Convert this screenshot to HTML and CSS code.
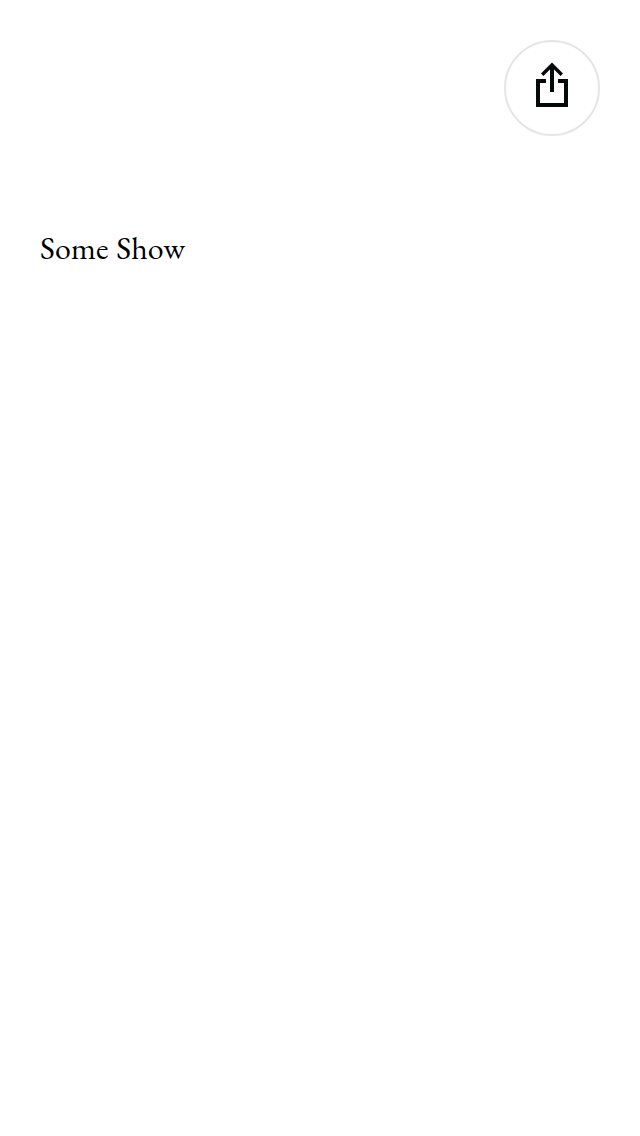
FILE: index.html
```html
<!DOCTYPE html>
<html lang="en">
<head>
<meta charset="utf-8">
<title>Some Show</title>
<link rel="stylesheet" href="styles.css">
</head>
<body>
<main class="page">
  <header class="toolbar">
    <button class="share" type="button" aria-label="Share">
      <svg class="share-icon" viewBox="0 0 36 46" fill="none" stroke="#04090a">
        <path stroke-width="4" d="M12 19H4V43H32V19H24M18 30V3"/>
        <path stroke-width="3.4" d="M8.2 12.8L18 3L27.8 12.8"/>
      </svg>
    </button>
  </header>
  <h1 class="title">Some Show</h1>
</main>
</body>
</html>
```

FILE: styles.css
```css
body {
  margin: 0;
  background: #fff;
}

.page {
  box-sizing: border-box;
  min-height: 1136px;
  padding: 40px;
}

.toolbar {
  display: flex;
  justify-content: flex-end;
}

.share {
  display: flex;
  align-items: center;
  justify-content: center;
  box-sizing: border-box;
  width: 96px;
  height: 96px;
  padding: 0;
  border: 2px solid #e5e5e5;
  border-radius: 50%;
  background: #fff;
}

.share-icon {
  width: 36px;
  height: 46px;
  margin-bottom: 6px;
}

.title {
  margin: 90px 0 0;
  color: #000;
  font: 400 32px/44px "EB Garamond", "Liberation Serif", serif;
  letter-spacing: 0.14px;
  word-spacing: 1px;
  white-space: nowrap;
}
```
